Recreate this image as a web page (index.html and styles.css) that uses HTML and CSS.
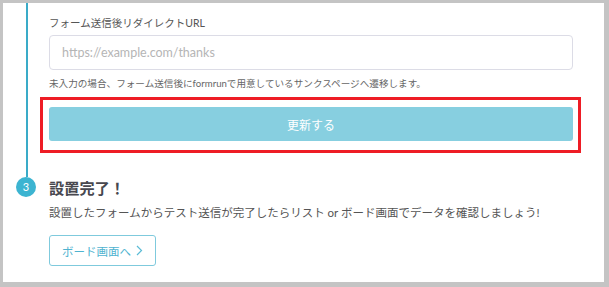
FILE: index.html
```html
<!DOCTYPE html>
<html>
<head>
  <title>設置</title>
  <meta charset="utf-8">
  <link rel="stylesheet" href="styles.css">
</head>
<body>
  <div class="panel">
    <div class="stepBody">
      <div class="label">フォーム送信後リダイレクトURL</div>
      <input class="urlInput" type="text" placeholder="https://example.com/thanks">
      <div class="help">未入力の場合、フォーム送信後にformrunで用意しているサンクスページへ遷移します。</div>
      <div class="highlight">
        <button class="submit">更新する</button>
      </div>
    </div>
    <div class="stepHead">
      <div class="num">3</div>
      <div class="heading">設置完了！</div>
    </div>
    <div class="stepFoot">
      <p class="desc">設置したフォームからテスト送信が完了したらリスト or ボード画面でデータを確認しましょう!</p>
      <a class="boardBtn" href="#">ボード画面へ<svg width="7" height="11" viewBox="0 0 7 11"><path d="M1 1l4.5 4.5L1 10" fill="none" stroke="#5bbcd6" stroke-width="1.2"/></svg></a>
    </div>
  </div>
</body>
</html>
```

FILE: styles.css
```css
body {
  margin: 0;
  background: #c4c4c4;
  font-family: Lato, "Noto Sans CJK JP", sans-serif;
}

.panel {
  margin: 3px 5px 5px 3px;
  height: 279px;
  background: #fff;
}

.stepBody {
  margin-left: 23px;
  border-left: 2px solid #3aabc8;
  padding: 12px 0 24px 21px;
  width: 524px;
}

.label {
  font-size: 10.5px;
  line-height: 16px;
  color: #555;
  margin-bottom: 4px;
}

.urlInput {
  display: block;
  box-sizing: border-box;
  width: 524px;
  height: 35px;
  border: 1px solid #dcdce6;
  border-radius: 4px;
  padding: 0 12px;
  font-family: inherit;
  font-size: 12.5px;
  outline: none;
}
.urlInput::placeholder {
  color: #b5b5b5;
}

.help {
  margin-top: 6px;
  font-size: 9.6px;
  line-height: 16px;
  color: #666;
}

.highlight {
  margin: 5px -8px 0 -9px;
  border: 3px solid #ee1c25;
  padding: 7px 5px 9px 6px;
}

.submit {
  display: block;
  width: 100%;
  height: 34px;
  border: none;
  border-radius: 3px;
  background: #87cfe0;
  color: #fff;
  font-family: inherit;
  font-size: 12px;
}

.stepHead {
  display: flex;
  align-items: center;
  gap: 13px;
  margin-left: 13px;
  height: 20px;
}

.num {
  width: 20px;
  height: 20px;
  border-radius: 50%;
  background: #3cb4d1;
  color: #fff;
  font-size: 11px;
  line-height: 20px;
  text-align: center;
}

.heading {
  font-size: 15.2px;
  font-weight: bold;
  color: #48484f;
}

.stepFoot {
  padding-left: 46px;
}

.desc {
  margin: 7px 0 0;
  font-size: 11.5px;
  line-height: 18px;
  color: #555;
}

.boardBtn {
  display: flex;
  align-items: center;
  gap: 5px;
  box-sizing: border-box;
  width: 107px;
  height: 31px;
  margin-top: 13px;
  padding-left: 12px;
  border: 1px solid #7fcadd;
  border-radius: 3px;
  color: #4fb3d0;
  font-size: 11.5px;
  text-decoration: none;
}
```
